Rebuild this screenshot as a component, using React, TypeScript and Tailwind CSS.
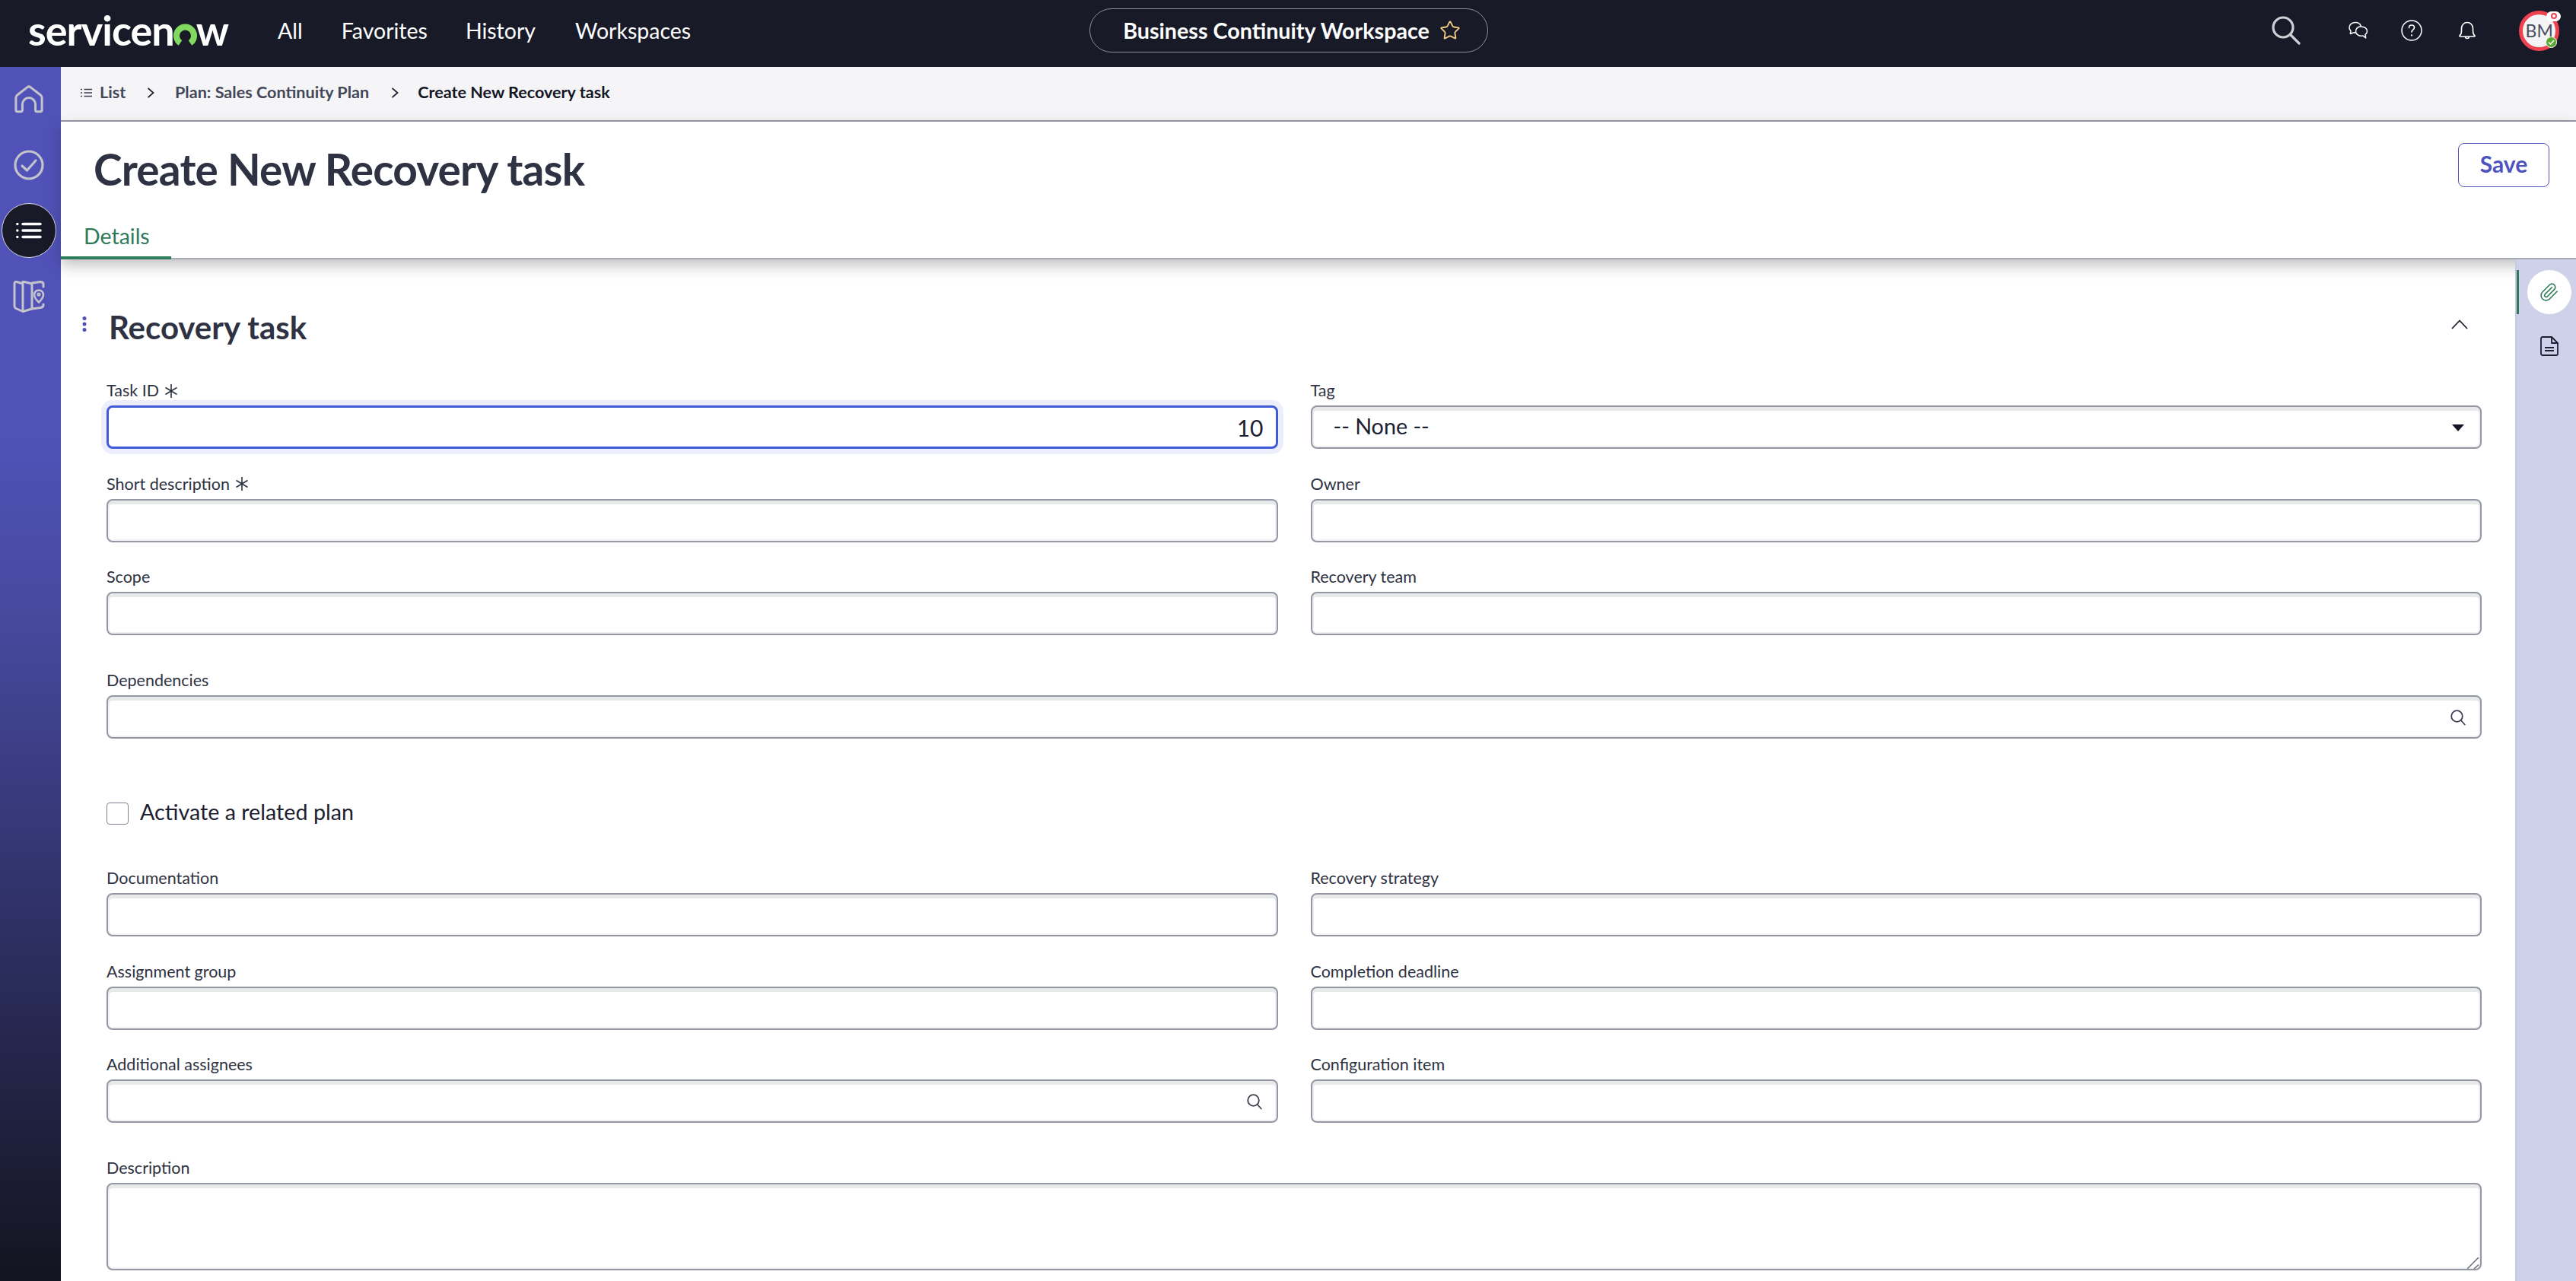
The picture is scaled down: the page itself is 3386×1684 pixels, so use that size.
import { Star } from "lucide-react";

const fieldClass =
  "h-[57px] w-full rounded-[8px] border-2 border-[#9497a3] bg-white shadow-[inset_0_5px_0_#e8e9ea,inset_0_0_0_2px_#f0f1f1] outline-none";

function Asterisk() {
  return (
    <svg width="18" height="18" viewBox="0 0 18 18" className="ml-[7px]" fill="none" stroke="#2e3242" strokeWidth="1.6">
      <path d="M9 0v18M1.500 4.500l15 9M16.500 4.500l-15 9" />
    </svg>
  );
}

function Label({ text, required }: { text: string; required?: boolean }) {
  return (
    <div className="mb-[6px] flex h-[26px] items-center pb-[1px] text-[21.5px] text-[#2e3242]">
      {text}
      {required && <Asterisk />}
    </div>
  );
}

function FieldSearch() {
  return (
    <svg width="20" height="21" viewBox="0 0 20 21" className="absolute right-[21px] top-[19px]" fill="none" stroke="#3c4050" strokeWidth="1.800" strokeLinecap="round">
      <circle cx="8.500" cy="8.500" r="7.300" />
      <path d="M13.800 14l5 5.500" />
    </svg>
  );
}

function Field({ label, required, search }: { label: string; required?: boolean; search?: boolean }) {
  return (
    <div>
      <Label text={label} required={required} />
      <div className="relative">
        <input className={fieldClass} aria-label={label} />
        {search && <FieldSearch />}
      </div>
    </div>
  );
}

function Crumb() {
  return (
    <svg width="10" height="14" viewBox="0 0 10 14" className="shrink-0" fill="none" stroke="#1d2030" strokeWidth="1.800">
      <path d="M1.500 .8L8.500 7l-7 6.200" />
    </svg>
  );
}

function RailIcons() {
  return (
    <div className="flex flex-col items-center pr-[5px]">
      <svg width="38" height="37" viewBox="0 0 40 38" className="mt-[24px]" fill="none" stroke="#c3c3cc" strokeWidth="3.200" strokeLinejoin="round">
        <path d="M4 36a2 2 0 0 1-2-2V17q0-2 1.500-3.500L17.500 2.500q2.500-2 5 0l14 11Q38 15 38 17v17a2 2 0 0 1-2 2h-5a2 2 0 0 1-2-2v-8a9 9 0 0 0-18 0v8a2 2 0 0 1-2 2z" />
      </svg>
      <svg width="40" height="40" viewBox="0 0 40 40" className="mt-[48px]" fill="none" stroke="#c3c3cc" strokeWidth="3.200" strokeLinecap="round" strokeLinejoin="round">
        <circle cx="20" cy="20" r="18" />
        <path d="M11 21l6.500 6L29 14" />
      </svg>
      <div className="mt-[30px] flex h-[72px] w-[72px] items-center justify-center rounded-full border-[1.5px] border-[#d5d5de] bg-[#181a28]">
        <svg width="34" height="22" viewBox="0 0 34 22" fill="none" stroke="white" strokeWidth="3.400" strokeLinecap="round">
          <path d="M9 2.500h23M9 11h23M9 19.500h23M1.800 2.500h.1M1.800 11h.1M1.800 19.500h.1" />
        </svg>
      </div>
      <svg width="42" height="42" viewBox="0 0 42 42" className="mt-[30px]" fill="none" stroke="#c3c3cc" strokeWidth="3" strokeLinecap="round" strokeLinejoin="round">
        <path d="M13 4L5 1.500Q2 1 2 4v29q0 2.500 2 3.500l9 4 12-3.500V4L13 1v39M25 3l11-1.500q4 0 4 3V8M25 37l11-1.500q4-.5 4-3.500v-1" />
        <path d="M34 28.500c-3-3-6-6-6-10a6 6 0 0 1 12 0c0 4-3 7-6 10z" strokeWidth="2.600" />
        <circle cx="34" cy="18" r="1.600" strokeWidth="2" />
      </svg>
    </div>
  );
}

function TopBar() {
  return (
    <header className="flex h-[88px] shrink-0 items-center bg-[#181a28] pb-[8px] text-white">
      <div className="ml-[37px] flex h-[62px] w-[270px] items-center text-[54px] font-bold leading-none tracking-[-1px]">
        <span>servicen</span>
        <svg width="31" height="31" viewBox="0 0 31 31" className="mx-[-1px] mt-[10px] shrink-0" fill="none" stroke="#81d95f" strokeWidth="8">
          <path d="M9 26.500a11.500 11.500 0 1 1 13 0" />
        </svg>
        <span>w</span>
      </div>
      <nav className="flex text-[28.5px] leading-none">
        <span className="ml-[58px]">All</span>
        <span className="ml-[51px]">Favorites</span>
        <span className="ml-[50px]">History</span>
        <span className="ml-[52px]">Workspaces</span>
      </nav>
      <div className="ml-[524px] flex h-[58px] w-[524px] items-center rounded-full border-[1.5px] border-[#8d8e98] pl-[43px]">
        <span className="text-[28.7px] font-bold leading-none">Business Continuity Workspace</span>
        <Star size={28} strokeWidth={1.6} className="ml-[13px] text-[#f3cf80]" />
      </div>
      <svg width="38" height="38" viewBox="0 0 38 38" className="ml-[1030px]" fill="none" stroke="#cfcfd6" strokeWidth="3.200" strokeLinecap="round">
        <circle cx="15" cy="15" r="13" />
        <path d="M25 25l11 11" />
      </svg>
      <svg width="26" height="24" viewBox="0 0 26 24" className="ml-[63px]" fill="none" stroke="white" strokeWidth="1.500" strokeLinejoin="round">
        <path d="M9 1.500c-4.500 0-8 2.800-8 6.800 0 2 .9 3.500 2 4.500L2.300 16.500l4.700-1.800c1 .3 2 .4 3 .3" />
        <path d="M9 1.500c3.800 0 6.500 2 7.300 5" />
        <path d="M16.500 6.800c-4 0-7 2.700-7 6.200s3 6.200 7 6.200c.8 0 1.500-.1 2.200-.3l4 3-.7-4.500c1.600-1.100 2.500-2.700 2.500-4.400 0-3.500-3.500-6-8-6z" />
      </svg>
      <svg width="28" height="28" viewBox="0 0 28 28" className="ml-[43px]" fill="none" stroke="white" strokeWidth="1.500" strokeLinecap="round">
        <circle cx="14" cy="14" r="13" />
        <path d="M10.500 10.500c0-2 1.500-3.500 3.500-3.500s3.500 1.500 3.500 3.300c0 2.800-3.500 2.900-3.500 5.700" strokeWidth="1.700" />
        <path d="M14 20.300v.2" strokeWidth="2.200" />
      </svg>
      <svg width="24" height="24" viewBox="0 0 24 24" className="ml-[47px]" fill="none" stroke="white" strokeWidth="1.600" strokeLinejoin="round">
        <path d="M2 19c2-1.500 2.500-3 2.500-6.500V9a7.500 7.500 0 0 1 15 0v3.500c0 3.500.5 5 2.500 6.500q.5 1-1 1H3q-1.500 0-1-1z" />
        <path d="M9.500 20a2.500 2.500 0 0 0 5 0" />
      </svg>
      <div className="relative ml-[56px] flex h-[53px] w-[53px] items-center justify-center rounded-full border-[5px] border-[#ee4250] bg-[#f4f4f6] text-[23px] text-[#4a4e5c]">
        BM
        <span className="absolute right-[-7px] top-[-4px] flex h-[13px] w-[19px] items-center justify-center rounded-full bg-white">
          <span className="h-[8px] w-[8px] rounded-full border-[2px] border-[#ee4250]" />
        </span>
        <span className="absolute bottom-[-1px] right-[-2px] flex h-[15px] w-[15px] items-center justify-center rounded-full border border-white bg-[#5aa82f]">
          <svg width="9" height="7" viewBox="0 0 9 7" fill="none" stroke="white" strokeWidth="1.600"><path d="M1 3.500L3.500 6 8 1" /></svg>
        </span>
      </div>
    </header>
  );
}

function Breadcrumb() {
  return (
    <div className="flex h-[72px] shrink-0 items-center border-b-2 border-[#9a9aa8] bg-[#f5f5f7] pb-[3px] text-[21.6px] font-bold">
      <svg width="15" height="12" viewBox="0 0 15 12" className="ml-[26px]" fill="none" stroke="#3c4050" strokeWidth="1.500">
        <path d="M4.500 1.500H15M4.500 6H15M4.500 10.500H15M0 1.500h2M0 6h2M0 10.500h2" />
      </svg>
      <span className="ml-[10px] w-[34px] text-[#434757]">List</span>
      <span className="ml-[28px]"><Crumb /></span>
      <span className="ml-[27px] text-[#434757]">Plan: Sales Continuity Plan</span>
      <span className="ml-[29px]"><Crumb /></span>
      <span className="ml-[25px] text-[#141625]">Create New Recovery task</span>
    </div>
  );
}

function PageHead() {
  return (
    <div className="relative flex h-[181px] shrink-0 flex-col bg-white shadow-[0_8px_18px_rgba(30,30,40,0.28)]">
      <div className="flex items-start justify-between pl-[43px] pr-[35px] pt-[26px]">
        <h1 className="text-[56.8px] font-bold leading-[72px] tracking-[-0.8px] text-[#2e3242]">Create New Recovery task</h1>
        <button className="mt-[2px] h-[58px] w-[120px] rounded-[8px] border-[1.5px] border-[#5052b8] pb-[3px] text-[30px] font-bold text-[#4f52bd]">Save</button>
      </div>
      <div className="mt-auto border-b-2 border-[#a9abb3]">
        <div className="mb-[-2px] h-[50px] w-[145px] border-b-[4px] border-[#2f7a5a] pl-[30px] text-[28.5px] leading-[38px] text-[#2f7a5a]">Details</div>
      </div>
    </div>
  );
}

function Form() {
  return (
    <main className="min-w-0 flex-1 overflow-hidden bg-white pl-[60px] pr-[44px] pt-[59px]">
      <div className="mb-[41px] flex h-[60px] items-center">
        <svg width="6" height="20" viewBox="0 0 6 20" className="ml-[-32px] mb-[8px] fill-[#5052b8]">
          <circle cx="3" cy="2.500" r="2.500" /><circle cx="3" cy="10" r="2.500" /><circle cx="3" cy="17.500" r="2.500" />
        </svg>
        <h2 className="ml-[29px] text-[42px] font-bold text-[#2e3242]">Recovery task</h2>
        <svg width="22" height="13" viewBox="0 0 22 13" className="ml-auto mr-[18px] mb-[8px]" fill="none" stroke="#1d2030" strokeWidth="1.800">
          <path d="M1 12L11 1.500 21 12" />
        </svg>
      </div>

      <div className="grid grid-cols-2 gap-x-[43px] gap-y-[33.5px]">
        <div>
          <Label text="Task ID" required />
          <input
            readOnly
            value="10"
            aria-label="Task ID"
            className="h-[57px] w-full rounded-[8px] border-[3px] border-[#3f5bd8] bg-white pr-[16px] text-right text-[30px] text-[#1d2030] shadow-[0_0_0_7px_#eceefb] outline-none"
          />
        </div>
        <div>
          <Label text="Tag" />
          <div className="relative flex h-[57px] items-center rounded-[8px] border-2 border-[#9497a3] bg-white pb-[2px] pl-[28px] text-[28.7px] text-[#1d2030] shadow-[inset_0_5px_0_#e8e9ea,inset_0_0_0_2px_#f0f1f1]">
            -- None --
            <span className="absolute right-[21px] top-[23px] h-0 w-0 border-x-[8px] border-t-[9px] border-x-transparent border-t-[#141625]" />
          </div>
        </div>
        <Field label="Short description" required />
        <Field label="Owner" />
        <Field label="Scope" />
        <Field label="Recovery team" />
      </div>

      <div className="mt-[47px]">
        <Field label="Dependencies" search />
      </div>

      <label className="mt-[84px] flex h-[28px] items-center">
        <span className="h-[29px] w-[29px] rounded-[4px] border-[1.5px] border-[#7f8391] bg-white" />
        <span className="ml-[15px] pb-[3px] text-[28.7px] leading-none text-[#1d2030]">Activate a related plan</span>
      </label>

      <div className="mt-[59px] grid grid-cols-2 gap-x-[43px] gap-y-[33.5px]">
        <Field label="Documentation" />
        <Field label="Recovery strategy" />
        <Field label="Assignment group" />
        <Field label="Completion deadline" />
        <Field label="Additional assignees" search />
        <Field label="Configuration item" />
      </div>

      <div className="mt-[47px]">
        <Label text="Description" />
        <div className="relative">
          <textarea aria-label="Description" className="block h-[115px] w-full resize-none rounded-[8px] border-2 border-[#9497a3] bg-white shadow-[inset_0_5px_0_#e8e9ea,inset_0_0_0_2px_#f0f1f1] outline-none" />
          <svg width="16" height="15" viewBox="0 0 16 15" className="absolute bottom-[2px] right-[3px]" fill="none" stroke="#6b6e78" strokeWidth="1.500">
            <path d="M0 15L15 0M9 15l6-5.500" />
          </svg>
        </div>
      </div>
    </main>
  );
}

function SideRail() {
  return (
    <aside className="relative flex w-[80px] shrink-0 flex-col items-center border-l-2 border-[#c8c9dc] bg-[#cfd0ea]">
      <span className="absolute left-0 top-[14px] h-[58px] w-[3px] bg-[#2f7a5a]" />
      <div className="ml-[8px] mt-[14px] flex h-[58px] w-[58px] items-center justify-center rounded-full bg-white">
        <svg width="26" height="26" viewBox="0 0 24 24" fill="none" stroke="#2f7a5a" strokeWidth="1.500" strokeLinecap="round" strokeLinejoin="round">
          <path d="M21.400 11.100l-9.200 9.200a6 6 0 0 1-8.500-8.500l8.600-8.600a4 4 0 1 1 5.700 5.700l-8.600 8.600a2 2 0 0 1-2.800-2.800l8.500-8.500" />
        </svg>
      </div>
      <svg width="24" height="26" viewBox="0 0 24 26" className="ml-[8px] mt-[29px]" fill="none" stroke="#1d2030" strokeWidth="1.800" strokeLinejoin="round">
        <path d="M3 1h12l8 8v14a2 2 0 0 1-2 2H3a2 2 0 0 1-2-2V3a2 2 0 0 1 2-2z" />
        <path d="M15 1v8h8M6 15h12M6 19h12" />
      </svg>
    </aside>
  );
}

export default function App() {
  return (
    <div className="flex h-[1684px] w-[3386px] flex-col overflow-hidden bg-white font-['Lato',sans-serif]">
      <TopBar />
      <div className="flex min-h-0 flex-1">
        <div className="w-[80px] shrink-0 bg-[linear-gradient(180deg,#5052b8_0%,#5052b8_30%,#45489a_47%,#3a3c82_58%,#13141f_100%)]">
          <RailIcons />
        </div>
        <div className="flex min-w-0 flex-1 flex-col">
          <Breadcrumb />
          <PageHead />
          <div className="flex min-h-0 flex-1">
            <Form />
            <SideRail />
          </div>
        </div>
      </div>
    </div>
  );
}
